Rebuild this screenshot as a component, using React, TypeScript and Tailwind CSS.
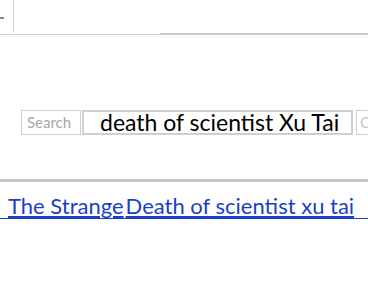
export default function App() {
  return (
    <div className="w-[368px] h-[292px] bg-white overflow-hidden relative" style={{ fontFamily: 'Lato, "Open Sans", sans-serif' }}>
      {/* top bar */}
      <div className="flex h-[33px]">
        <div className="w-[14px] border-r border-[#d4d4d4] flex items-center">
          <span className="block w-[4px] h-[2px] bg-[#888] mt-[3px]" />
        </div>
        <div className="flex-1" />
      </div>
      <div className="flex">
        <div className="w-[160px] h-[1px] bg-[#cfcfcf] mt-[1px]" />
        <div className="flex-1 h-[2px] bg-[#c6c6c6]" />
      </div>
      <div className="h-[1px] bg-[#f4f4f4] mt-[1px]" />

      {/* search row */}
      <div className="flex items-center mt-[73px] pl-[21px] whitespace-nowrap">
        <div className="shrink-0 w-[60px] h-[25px] border border-[#cfcfcf] text-[#a8a8a8] text-[15px] leading-[23px] px-[5px]">Search</div>
        <div className="shrink-0 ml-[1px] w-[271px] h-[25px] border-2 border-[#cfcfcf] text-black text-[23px] leading-[20px] pl-[16px]">death of scientist Xu Tai</div>
        <div className="shrink-0 ml-[3px] w-[40px] h-[25px] border border-[#cfcfcf] text-[#c4c4c4] text-[15px] leading-[23px] pl-[3px]">C</div>
      </div>

      {/* separator */}
      <div className="h-[3px] bg-[#c8c8c8] mt-[44px]" />

      {/* link */}
      <div className="mt-[12px] flex whitespace-nowrap text-[22px] leading-[24px] text-[#1c3fc7] border-b border-[#1c3fc7]">
        <span className="w-[8px]" />
        <a className="underline">The Strange</a>
        <a className="underline ml-[2px]">Death of scientist xu tai</a>
      </div>
    </div>
  )
}
